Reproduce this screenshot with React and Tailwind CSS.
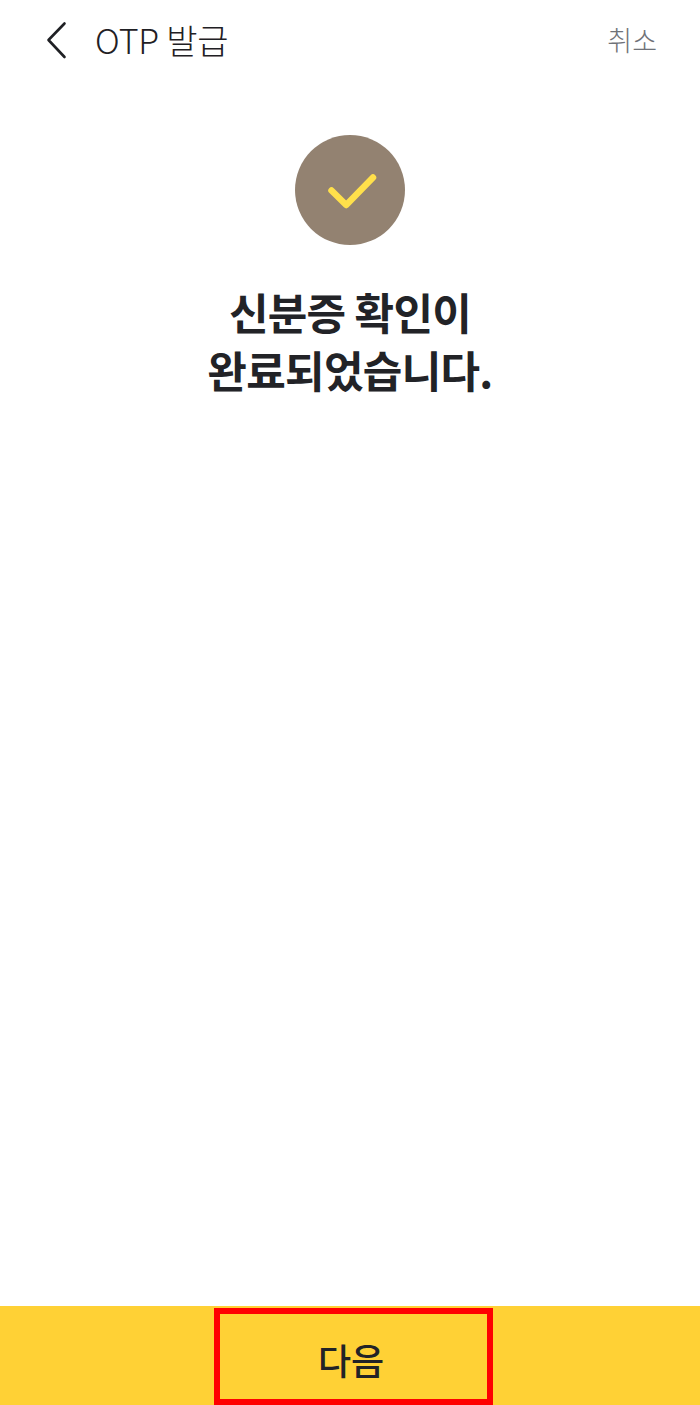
import React from 'react';

const BackIcon = () => (
  <svg width="24" height="40" viewBox="0 0 24 40" fill="none" stroke="#1f2024" strokeWidth="2.6" strokeLinecap="round" strokeLinejoin="round">
    <path d="M21.5 3.5 L5.5 20 L21.5 37" />
  </svg>
);

const CheckIcon = () => (
  <svg width="60" height="60" viewBox="0 0 60 60" fill="none" stroke="#ffe04b" strokeWidth="6.5" strokeLinecap="round" strokeLinejoin="round">
    <path d="M11.5 30.5 L26.2 45 L53 17.5" />
  </svg>
);

const fontKr = { fontFamily: '"Noto Sans CJK KR", "Noto Sans", sans-serif' };

export default function App() {
  return (
    <div className="w-[700px] h-[1405px] bg-white flex flex-col" style={fontKr}>
      <header className="h-[80px] flex items-center justify-between pl-[43px] pr-[43px]">
        <div className="flex items-center gap-[28px]">
          <BackIcon />
          <h1 className="text-[34px] leading-[40px] font-light text-[#1f2024] tracking-[-0.2px]">OTP 발급</h1>
        </div>
        <button className="text-[27px] leading-[40px] font-light text-[#6f7278]">취소</button>
      </header>

      <main className="flex-1 flex flex-col items-center pt-[55px]">
        <div className="w-[110px] h-[110px] rounded-full bg-[#938271] flex items-center justify-center">
          <CheckIcon />
        </div>
        <h2 className="mt-[37px] text-[43px] leading-[58px] font-bold text-[#222327] text-center tracking-[-0.7px]">
          신분증 확인이
          <br />
          완료되었습니다.
        </h2>
      </main>

      <footer className="h-[99px] bg-[#ffd135] flex pl-[214px] pt-[2px]">
        <button className="w-[279px] h-[97px] border-[6px] border-[#ff0000] flex items-center justify-center pt-[4px] pr-[5px] text-[36px] font-medium text-[#222327]">
          다음
        </button>
      </footer>
    </div>
  );
}
